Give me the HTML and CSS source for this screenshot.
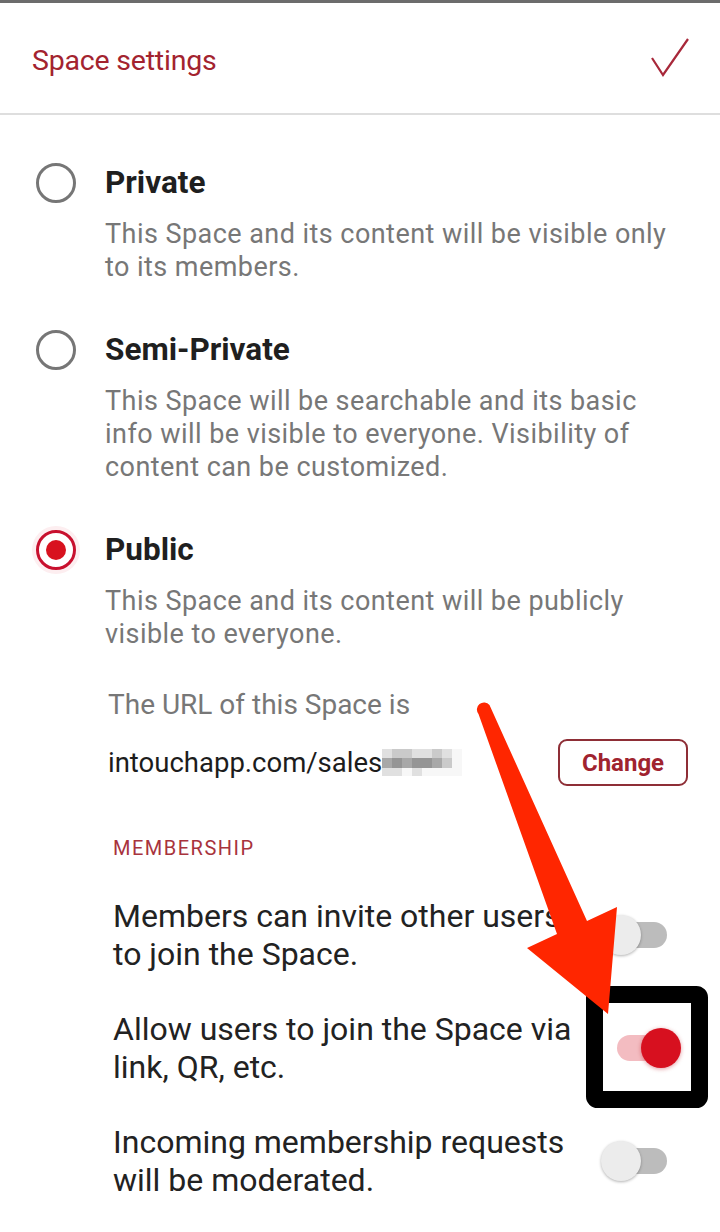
FILE: index.html
```html
<!DOCTYPE html>
<html>
<head>
<meta charset="utf-8">
<link rel="stylesheet" href="styles.css">
</head>
<body>
<div class="page">
  <header class="topbar">
    <h1 class="title">Space settings</h1>
    <svg class="check" width="40" height="40" viewBox="0 0 40 40"><path d="M2 21 L13 38 L38 2" fill="none" stroke="#a8283a" stroke-width="2.2" stroke-linejoin="miter"/></svg>
  </header>

  <main class="content">
    <section class="option">
      <span class="radio"></span>
      <div class="option-body">
        <div class="option-title">Private</div>
        <p class="option-desc">This Space and its content will be visible only to its members.</p>
      </div>
    </section>

    <section class="option">
      <span class="radio"></span>
      <div class="option-body">
        <div class="option-title">Semi-Private</div>
        <p class="option-desc">This Space will be searchable and its basic info will be visible to everyone. Visibility of content can be customized.</p>
      </div>
    </section>

    <section class="option">
      <span class="radio checked"></span>
      <div class="option-body">
        <div class="option-title">Public</div>
        <p class="option-desc">This Space and its content will be publicly visible to everyone.</p>
      </div>
    </section>

    <div class="url-block">
      <div class="url-label">The URL of this Space is</div>
      <div class="url-row">
        <div class="url-text">intouchapp.com/sales<span class="blur">
          <i class="c1"></i><i class="c2"></i><i class="c2"></i><i class="c1"></i><i class="c1"></i><i class="c2"></i><i class="c1"></i><i class="c0"></i>
          <i class="c3"></i><i class="c4"></i><i class="c3"></i><i class="c4"></i><i class="c4"></i><i class="c3"></i><i class="c2"></i><i class="c0"></i>
          <i class="c1"></i><i class="c1"></i><i class="c0"></i><i class="c1"></i><i class="c0"></i><i class="c0"></i><i class="c0"></i><i class="c0"></i>
        </span></div>
        <button class="change-btn">Change</button>
      </div>
    </div>

    <div class="section-label">MEMBERSHIP</div>

    <div class="toggle-row">
      <div class="toggle-text">Members can invite other users to join the Space.</div>
      <span class="switch"><span class="track"></span><span class="thumb"></span></span>
    </div>
    <div class="toggle-row">
      <div class="toggle-text">Allow users to join the Space via link, QR, etc.</div>
      <span class="switch on"><span class="track"></span><span class="thumb"></span></span>
    </div>
    <div class="toggle-row">
      <div class="toggle-text">Incoming membership requests will be moderated.</div>
      <span class="switch"><span class="track"></span><span class="thumb"></span></span>
    </div>
  </main>

  <svg class="annotation" width="720" height="1232" viewBox="0 0 720 1232">
    <rect x="594.5" y="994.5" width="105" height="105" rx="3" fill="none" stroke="#000" stroke-width="17"/>
    <path d="M478.5 714 L557 934 L527 948 L608 1014 L617 907 L587 921 L489.5 705 A6 6 0 0 0 478.5 714 Z" fill="#ff2600"/>
  </svg>
</div>
</body>
</html>
```

FILE: styles.css
```css
* { box-sizing: border-box; }
html, body { margin: 0; padding: 0; }
body {
  background: #fff;
  font-family: Roboto, "Noto Sans", sans-serif;
  width: 720px;
  height: 1232px;
  overflow: hidden;
}
.page { position: relative; width: 720px; height: 1232px; }

.topbar {
  height: 115px;
  border-top: 3px solid #6c6c6c;
  border-bottom: 2px solid #dedede;
  display: flex;
  align-items: center;
  justify-content: space-between;
  padding: 0 30px 0 32px;
}
.title {
  margin: 4px 0 0;
  font-size: 28.5px;
  font-weight: 400;
  color: #a3232f;
  letter-spacing: -0.2px;
}
.check { margin-top: -2px; }

.content { padding: 48px 0 0 36px; }

.option {
  display: flex;
  align-items: flex-start;
  margin-bottom: 46px;
}
.radio {
  flex: none;
  width: 40px;
  height: 40px;
  border-radius: 50%;
  border: 3.5px solid #767676;
  margin-right: 29px;
  position: relative;
}
.radio.checked {
  border-color: #c8102e;
  box-shadow: 0 0 0 4px #fdeef0;
}
.radio.checked::after {
  content: "";
  position: absolute;
  left: 6.5px; top: 6.5px;
  width: 20px; height: 20px;
  border-radius: 50%;
  background: #d8121f;
}
.option-body { width: 573px; }
.option-title {
  font-size: 31.5px;
  font-weight: 700;
  line-height: 40px;
  color: #1f1f1f;
}
.option-desc {
  margin: 15px 0 0;
  font-size: 27px;
  letter-spacing: 0.45px;
  line-height: 33px;
  color: #777;
}

.url-block { padding-left: 72px; margin-top: -9px; }
.url-label {
  font-size: 28px;
  line-height: 33px;
  color: #777;
}
.url-row {
  display: flex;
  align-items: center;
  justify-content: space-between;
  padding-right: 32px;
  margin-top: 18px;
}
.url-text {
  font-size: 27.5px;
  color: #1c1c1c;
  display: flex;
  align-items: center;
}
.blur {
  display: grid;
  grid-template-columns: repeat(8, 10px);
  grid-template-rows: 9px 10px 8px;
  margin-left: 0;
}
.blur i { display: block; }
.c0 { background: #f7f7f7; }
.c1 { background: #e0e0e0; }
.c2 { background: #cacaca; }
.c3 { background: #a8a8a8; }
.c4 { background: #959595; }

.change-btn {
  font-family: Roboto, "Noto Sans", sans-serif;
  width: 130px;
  height: 47px;
  border: 2px solid #8e2e36;
  border-radius: 9px;
  background: #fff;
  color: #a0232f;
  font-size: 24px;
  font-weight: 700;
  padding: 0;
}

.section-label {
  margin: 50px 0 0 77px;
  font-size: 20px;
  letter-spacing: 1.5px;
  color: #a8333d;
}

.toggle-row {
  display: flex;
  align-items: center;
  justify-content: space-between;
  padding: 0 39px 0 77px;
  margin-top: 37px;
}
.section-label + .toggle-row { margin-top: 37px; }
.toggle-text {
  width: 470px;
  font-size: 32px;
  line-height: 38px;
  color: #222;
}
.switch {
  position: relative;
  width: 80px;
  height: 40px;
  flex: none;
}
.switch .track {
  position: absolute;
  left: 16px; right: 14px; top: 7px;
  height: 26px;
  border-radius: 13px;
  background: #bcbcbc;
}
.switch .thumb {
  position: absolute;
  left: 0; top: 0;
  width: 40px; height: 40px;
  border-radius: 50%;
  background: #ececec;
  box-shadow: 0 1px 3px rgba(0,0,0,0.3);
}
.switch.on .track { background: #f3bcc1; }
.switch.on .thumb { left: auto; right: 0; background: #d7101f; box-shadow: 0 1px 4px rgba(180,0,20,0.4); }

.annotation {
  position: absolute;
  left: 0; top: 0;
  pointer-events: none;
}
```
